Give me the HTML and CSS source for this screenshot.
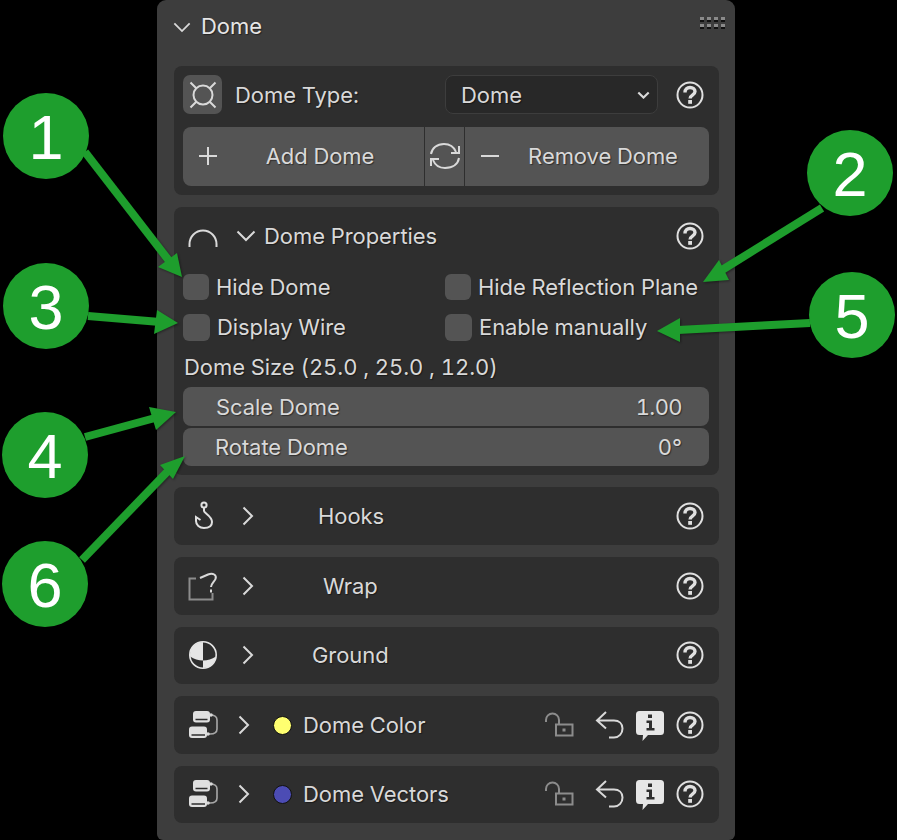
FILE: index.html
```html
<!DOCTYPE html>
<html lang="en">
<head>
<meta charset="utf-8">
<title>Dome</title>
<link rel="stylesheet" href="styles.css">
</head>
<body>
<svg class="defs" width="0" height="0" aria-hidden="true">
  <symbol id="help" viewBox="0 0 28 28">
    <circle cx="14" cy="14" r="12.500" fill="none" stroke="currentColor" stroke-width="2"/>
    <path d="M9 11.500c0-3.200 2.200-5 5-5s5 1.700 5 4.100c0 3.700-4.900 3.500-4.900 6.900" fill="none" stroke="currentColor" stroke-width="3.400"/>
    <rect x="12.200" y="19" width="3.800" height="3.800" fill="currentColor"/>
  </symbol>
  <symbol id="down" viewBox="0 0 20 12">
    <path d="M1.500 1.500 10 10l8.500-8.500" fill="none" stroke="currentColor" stroke-width="2"/>
  </symbol>
  <symbol id="down-bold" viewBox="0 0 20 12">
    <path d="M2 2 10 10l8-8" fill="none" stroke="currentColor" stroke-width="3.200"/>
  </symbol>
  <symbol id="right" viewBox="0 0 12 20">
    <path d="M1.500 1.500 10 10l-8.500 8.500" fill="none" stroke="currentColor" stroke-width="2"/>
  </symbol>
  <symbol id="nodes" viewBox="0 0 30 30">
    <rect x="5" y="1" width="17" height="11.500" rx="3" fill="currentColor"/>
    <rect x="1" y="16.500" width="18" height="11.500" rx="3" fill="currentColor"/>
    <path d="M7.500 9.500h12M3.500 25h13.500" stroke="#2e2e2e" stroke-width="1.500"/>
    <path d="M22 5q7 0 7 5v9q0 5-7 5h-3" fill="none" stroke="#a8a8a8" stroke-width="1.600"/>
    <circle cx="23" cy="5" r="1.800" fill="#d9d9d9"/>
    <circle cx="20" cy="24" r="1.800" fill="#d9d9d9"/>
  </symbol>
  <symbol id="lock" viewBox="0 0 30 26">
    <path d="M2 10V8a6.500 6.500 0 0 1 13 0v4" fill="none" stroke="#8c8c8c" stroke-width="2"/>
    <rect x="12" y="12.500" width="16.500" height="11" fill="none" stroke="#8c8c8c" stroke-width="2"/>
    <rect x="18.500" y="16.500" width="3" height="3" fill="#8c8c8c"/>
  </symbol>
  <symbol id="undo" viewBox="0 0 30 30">
    <path d="M11 2 2 10.500l9 8M2 10.500h17c5 0 8.500 3 8.500 8s-3.500 9-8.500 9h-5" fill="none" stroke="currentColor" stroke-width="2"/>
  </symbol>
  <symbol id="info" viewBox="0 0 28 30">
    <path d="M3.500 0h21Q28 0 28 3.500v17q0 3.500-3.500 3.500H12l-5.500 6 .5-6H3.500Q0 24 0 20.500v-17Q0 0 3.500 0Z" fill="#e6e6e6"/>
    <path d="M12 3.500h4v3.500h-4ZM10.500 9.500H16V17h2.500v2.500h-8V17H13v-5h-2.500Z" fill="#2e2e2e"/>
  </symbol>
</svg>

<main class="panel">
  <header class="panel-head">
    <svg class="chev-down chev-head"><use href="#down"/></svg>
    <h1 class="panel-title">Dome</h1>
    <div class="grip"><i></i><i></i><i></i><i></i><i></i><i></i><i></i><i></i></div>
  </header>

  <section class="box box-type">
    <div class="type-row">
      <div class="type-icon">
        <svg width="30" height="30" viewBox="0 0 30 30" fill="none" stroke="#d9d9d9" stroke-width="2">
          <circle cx="15" cy="15" r="9.500"/>
          <path d="M2.500 2.500 8.500 8.500M27.500 2.500 21.500 8.500M2.500 27.500 8.500 21.500M27.500 27.500 21.500 21.500"/>
        </svg>
      </div>
      <span class="type-label">Dome Type:</span>
      <div class="select"><span>Dome</span><svg class="select-chev"><use href="#down-bold"/></svg></div>
      <svg class="help"><use href="#help"/></svg>
    </div>
    <div class="btn-row">
      <div class="btn btn-add">
        <svg class="btn-icon" viewBox="0 0 20 20"><path d="M10 1v18M1 10h18" stroke="currentColor" stroke-width="2"/></svg>
        <span class="btn-text">Add Dome</span>
      </div>
      <div class="btn btn-swap">
        <svg width="32" height="32" viewBox="0 0 32 32" fill="none" stroke="currentColor" stroke-width="2">
          <path d="M2 14C3 8 8 4 15 4c6 0 10 3 12 8M30 6v7h-8M30 18c-1 6-6 10-14 10-6 0-10-3-12-8M2 26v-7h8"/>
        </svg>
      </div>
      <div class="btn btn-remove">
        <svg class="btn-icon" viewBox="0 0 20 20"><path d="M1 10h18" stroke="currentColor" stroke-width="2"/></svg>
        <span class="btn-text">Remove Dome</span>
      </div>
    </div>
  </section>

  <section class="box box-props">
    <div class="props-head">
      <svg class="arc" viewBox="0 0 30 20"><path d="M1.500 19v-3a13.500 13.500 0 0 1 27 0v3" fill="none" stroke="currentColor" stroke-width="2"/></svg>
      <svg class="chev-down chev-props"><use href="#down"/></svg>
      <span class="props-title">Dome Properties</span>
      <svg class="help"><use href="#help"/></svg>
    </div>
    <div class="checks">
      <label class="check"><span class="box-mark"></span>Hide Dome</label>
      <label class="check"><span class="box-mark"></span>Hide Reflection Plane</label>
      <label class="check check-b"><span class="box-mark"></span>Display Wire</label>
      <label class="check check-b"><span class="box-mark"></span>Enable manually</label>
    </div>
    <p class="size-label">Dome Size (25.0 , 25.0 , 12.0)</p>
    <div class="field field-first"><span>Scale Dome</span><span class="field-value">1.00</span></div>
    <div class="field field-second"><span>Rotate Dome</span><span>0°</span></div>
  </section>

  <section class="box row">
    <svg class="row-icon" viewBox="0 0 30 30" fill="none" stroke="currentColor" stroke-width="2">
      <circle cx="16" cy="4" r="2.600"/>
      <path d="M16 7v3c0 2 8 5 8 11 0 4-3.500 6-8 6s-8-3-8-7v-4l4.500 3"/>
    </svg>
    <svg class="chev-right"><use href="#right"/></svg>
    <span class="row-title title-hooks">Hooks</span>
    <svg class="help"><use href="#help"/></svg>
  </section>

  <section class="box row">
    <svg class="row-icon" viewBox="0 0 30 30" fill="none">
      <path d="M8 7.500H1.500v21h23V22" stroke="#8c8c8c" stroke-width="2"/>
      <path d="M12 7l8-3.500c5-2 9 .5 7.500 4.500-1 2.500-4 4-4.500 8M23 18.500v3" stroke="#d9d9d9" stroke-width="2"/>
    </svg>
    <svg class="chev-right"><use href="#right"/></svg>
    <span class="row-title title-wrap">Wrap</span>
    <svg class="help"><use href="#help"/></svg>
  </section>

  <section class="box row row-short">
    <svg class="row-icon" viewBox="0 0 30 30">
      <circle cx="15" cy="15" r="13.200" fill="none" stroke="#e6e6e6" stroke-width="1.600"/>
      <path d="M15 2A13 13 0 0 0 2.100 16.500Q8 20.500 15 20.500Z" fill="#e6e6e6"/>
      <path d="M15 20.500Q22 20.500 27.900 16.500A13 13 0 0 1 15 28Z" fill="#e6e6e6"/>
    </svg>
    <svg class="chev-right"><use href="#right"/></svg>
    <span class="row-title title-ground">Ground</span>
    <svg class="help"><use href="#help"/></svg>
  </section>

  <section class="box row">
    <svg class="row-icon"><use href="#nodes"/></svg>
    <svg class="chev-right chev-tight"><use href="#right"/></svg>
    <span class="dot dot-yellow"></span>
    <span class="row-title title-socket">Dome Color</span>
    <div class="row-tools">
      <svg class="tool-lock"><use href="#lock"/></svg>
      <svg class="tool-undo"><use href="#undo"/></svg>
      <svg class="tool-info"><use href="#info"/></svg>
    </div>
    <svg class="help"><use href="#help"/></svg>
  </section>

  <section class="box row row-short">
    <svg class="row-icon"><use href="#nodes"/></svg>
    <svg class="chev-right chev-tight"><use href="#right"/></svg>
    <span class="dot dot-blue"></span>
    <span class="row-title title-socket">Dome Vectors</span>
    <div class="row-tools">
      <svg class="tool-lock"><use href="#lock"/></svg>
      <svg class="tool-undo"><use href="#undo"/></svg>
      <svg class="tool-info"><use href="#info"/></svg>
    </div>
    <svg class="help"><use href="#help"/></svg>
  </section>
</main>

<svg class="notes" width="897" height="840" viewBox="0 0 897 840">
  <g class="note-arrow">
    <path d="M85 152 170 262"/><polygon points="182,277 158,267 177,253"/>
    <path d="M88 316 160 322"/><polygon points="178,323 157,310 154,334"/>
    <path d="M85 437 155 418"/><polygon points="176,412 149,407 156,430"/>
    <path d="M82 560 168 471"/><polygon points="185,456 160,465 173,479"/>
    <path d="M822 208 722 270"/><polygon points="703,282 719,260 729,280"/>
    <path d="M810 323 678 330"/><polygon points="657,331 680,318 680,342"/>
  </g>
  <g class="note-disc">
    <circle cx="46" cy="136" r="43"/><circle cx="850" cy="173" r="43"/>
    <circle cx="46" cy="306" r="43"/><circle cx="45" cy="455" r="43"/>
    <circle cx="852" cy="315" r="43"/><circle cx="45" cy="584" r="43"/>
  </g>
  <g class="note-num">
    <text x="46" y="159">1</text><text x="850" y="196">2</text>
    <text x="46" y="329">3</text><text x="45" y="478">4</text>
    <text x="852" y="338">5</text><text x="45" y="607">6</text>
  </g>
</svg>
</body>
</html>
```
FILE: styles.css
```css
* { box-sizing: border-box; }
html, body { margin: 0; height: 100%; }
body {
  background: #000;
  width: 897px;
  height: 840px;
  position: relative;
  overflow: hidden;
  font-family: Inter, "Noto Sans", sans-serif;
  font-size: 22px;
  letter-spacing: -.07px;
  font-variant-numeric: tabular-nums;
  color: #d9d9d9;
  text-shadow: 1px 1px 1px rgba(0, 0, 0, .45);
}
.defs { position: absolute; }
svg { display: block; flex: none; }

.panel {
  width: 578px;
  height: 840px;
  margin-left: 157px;
  padding: 0 16px 0 17px;
  background: #3d3d3d;
  border-radius: 9px 9px 6px 6px;
  display: flex;
  flex-direction: column;
}
.panel-head {
  height: 66px;
  flex: none;
  padding: 0 10px 14px 16px;
  display: flex;
  align-items: center;
  margin-left: -17px;
  margin-right: -16px;
}
.panel-title { margin: 0; font-size: 22px; font-weight: 400; color: #e6e6e6; margin-left: 10px; }
.chev-head { width: 18px; height: 11px; color: #d9d9d9; margin-top: 3px; }
.grip {
  margin-left: auto;
  margin-top: -6px;
  display: grid;
  grid-template-columns: repeat(4, 4px);
  gap: 2px 3px;
}
.grip i { width: 4px; height: 5px; background: linear-gradient(#8a8a8a 60%, #111 60%); }

.box { background: #2e2e2e; border-radius: 8px; flex: none; margin-bottom: 12px; width: 545px; }

.box-type { height: 129px; padding: 9px 9px 0; }
.type-row { display: flex; align-items: center; height: 39px; }
.type-icon {
  width: 39px; height: 39px; border-radius: 7px; background: #545454;
  display: flex; align-items: center; justify-content: center;
}
.type-label { margin-left: 13px; width: 210px; }
.select {
  width: 213px; height: 39px; border-radius: 8px; background: #282828;
  border: 1px solid #3d3d3d; padding: 0 7px 0 15px;
  display: flex; align-items: center; justify-content: space-between;
}
.select-chev { width: 13px; height: 8px; color: #d9d9d9; }
.help { width: 28px; height: 28px; color: #e0e0e0; margin-left: 18px; }

.btn-row { display: flex; margin-top: 13px; height: 59px; width: 526px; }
.btn { background: #545454; display: flex; align-items: center; height: 100%; padding-bottom: 1px; }
.btn-add { width: 242px; border-radius: 8px 0 0 8px; padding-left: 15px; border-right: 1px solid #2e2e2e; }
.btn-swap { width: 40px; justify-content: center; border-right: 1px solid #2e2e2e; color: #d9d9d9; }
.btn-remove { flex: 1; border-radius: 0 8px 8px 0; padding-left: 15px; }
.btn-icon { width: 20px; height: 20px; color: #d9d9d9; }
.btn-text { flex: 1; text-align: center; }
.btn-add .btn-text { padding-right: 2px; }
.btn-remove .btn-text { padding-right: 3px; }

.box-props { height: 268px; padding: 0 9px; }
.props-head { height: 58px; display: flex; align-items: center; }
.arc { width: 30px; height: 20px; color: #d9d9d9; margin-left: 5px; margin-top: 3px; }
.chev-props { width: 20px; height: 12px; color: #d9d9d9; margin-left: 18px; }
.props-title { margin-left: 8px; flex: 1; }
.props-head .help { margin-left: 0; margin-right: 6px; }
.checks { display: grid; grid-template-columns: 262px 1fr; row-gap: 14px; margin-top: 9px; }
.check { display: flex; align-items: center; height: 26px; gap: 7px; }
.check-b .box-mark { width: 27px; height: 27px; }
.box-mark { width: 26px; height: 26px; border-radius: 6px; background: #545454; flex: none; }
.size-label { margin: 14px 0 0 1px; line-height: 27px; }
.field {
  width: 526px; height: 39px; background: #545454;
  display: flex; align-items: center; justify-content: space-between;
  padding: 0 27px 0 33px;
  border-radius: 8px;
}
.field-first { margin-top: 6px; }
.field-second { margin-top: 2px; height: 38px; padding: 0 27px 1px 32px; }
.field-value { letter-spacing: -.6px; }

.row { height: 58px; display: flex; align-items: center; padding-left: 14px; }
.row-short { height: 57px; padding-bottom: 1px; }
.row-icon { width: 30px; height: 30px; color: #e0e0e0; }
.chev-right { width: 12px; height: 20px; color: #d9d9d9; margin-left: 24px; }
.chev-tight { margin-left: 20px; }
.row-title { flex: 1; }
.title-hooks { margin-left: 64px; }
.title-wrap { margin-left: 69px; }
.title-ground { margin-left: 58px; }
.row .help { margin-left: 0; margin-right: 15px; }
.dot { width: 19px; height: 19px; border-radius: 50%; border: 1px solid #111; margin-left: 23px; flex: none; }
.dot-yellow { background: #ffff70; }
.dot-blue { background: #4c4cb4; }
.title-socket { margin-left: 11px; }
.row-tools { display: flex; align-items: center; margin-right: 12px; }
.tool-lock { width: 30px; height: 26px; }
.tool-undo { width: 30px; height: 30px; color: #d9d9d9; margin-left: 21px; }
.tool-info { width: 28px; height: 30px; margin-left: 11px; margin-top: 2px; }

.notes { position: absolute; left: 0; top: 0; pointer-events: none; }
.note-arrow { filter: drop-shadow(1px 1px 1px rgba(0, 0, 0, .4)); }
.note-arrow path { stroke: #1e9e2d; stroke-width: 8; fill: none; }
.note-arrow polygon { fill: #1e9e2d; }
.note-disc circle { fill: #1e9e2d; }
.note-num text {
  fill: #fff;
  font-family: "Liberation Sans", Arial, sans-serif;
  font-size: 63px;
  text-anchor: middle;
  text-shadow: none;
}
```
